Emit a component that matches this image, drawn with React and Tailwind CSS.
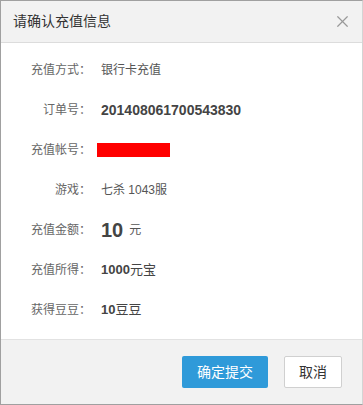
import { X } from 'lucide-react';

const font = { fontFamily: '"Liberation Sans", Arial, "Noto Sans CJK SC", sans-serif' };

// ── Info row: right-aligned label + value ────────────────────────────────────
function Row({ label, children }) {
  return (
    <div className="flex h-[40px] items-center">
      <span className="w-[90px] shrink-0 text-right text-[12px] text-[#666]">{label}：</span>
      <div className="ml-[10px] flex items-center text-[12px] text-[#555]">{children}</div>
    </div>
  );
}

export default function App() {
  return (
    <div className="h-[405px] w-[363px] bg-white" style={font}>
      <div className="flex h-full flex-col border border-[#a0a0a0] border-r-[#d4d4d4]">
        {/* Header */}
        <div className="flex h-[42px] shrink-0 items-center justify-between border-b border-[#dcdcdc] bg-[#f2f2f2] pl-[12px] pr-[10px]">
          <span className="text-[14px] text-[#333]">请确认充值信息</span>
          <X size={19} strokeWidth={1.5} className="text-[#999]" />
        </div>

        {/* Body */}
        <div className="flex-1 bg-white pt-[7px]">
          <Row label="充值方式">银行卡充值</Row>
          <Row label="订单号">
            <span className="text-[14px] font-bold text-[#444]">201408061700543830</span>
          </Row>
          <Row label="充值帐号">
            <span className="ml-[-4px] block h-[14px] w-[73px] bg-[#ff0000]" />
          </Row>
          <Row label="游戏">七杀 1043服</Row>
          <Row label="充值金额">
            <span className="text-[20px] font-bold text-[#444]">10</span>
            <span className="ml-[6px] text-[12px] text-[#555]">元</span>
          </Row>
          <Row label="充值所得">
            <span className="text-[13px] font-bold text-[#444]">1000</span>
            <span className="text-[13px] text-[#444]">元宝</span>
          </Row>
          <Row label="获得豆豆">
            <span className="text-[13px] font-bold text-[#444]">10</span>
            <span className="text-[13px] text-[#444]">豆豆</span>
          </Row>
        </div>

        {/* Footer */}
        <div className="flex h-[65px] shrink-0 items-center justify-end gap-[16px] border-t border-[#e2e2e2] bg-[#f2f2f2] pr-[20px]">
          <button className="h-[32px] w-[86px] rounded-[2px] bg-[#2f9ad9] text-[14px] text-white">确定提交</button>
          <button className="h-[32px] w-[58px] rounded-[2px] border border-[#d0d0d0] bg-white text-[14px] text-[#333]">取消</button>
        </div>
      </div>
    </div>
  );
}
